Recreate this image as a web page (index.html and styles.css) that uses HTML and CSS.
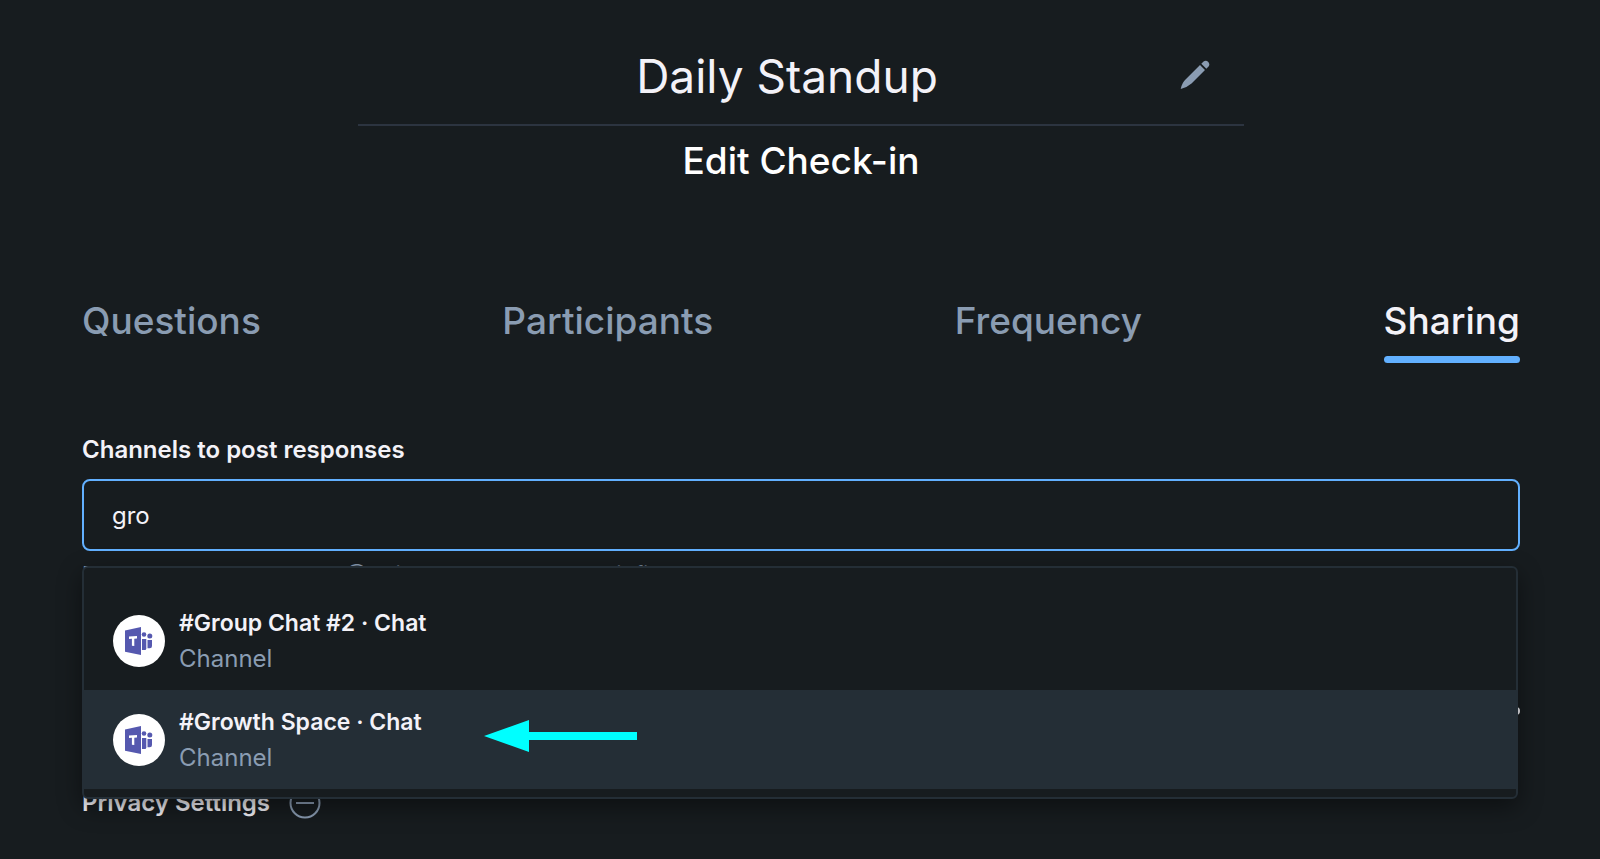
FILE: index.html
```html
<!DOCTYPE html>
<html lang="en">
<head>
  <meta charset="UTF-8">
  <meta name="viewport" content="width=device-width, initial-scale=1.0">
  <title>Edit Check-in</title>
  <link rel="stylesheet" href="styles.css">
</head>
<body>

  <!-- Teams logo, reused by every option -->
  <svg class="sprite" width="0" height="0" aria-hidden="true">
    <symbol id="teams" viewBox="0 0 52 52">
      <circle cx="26" cy="26" r="26" fill="#fff"/>
      <g fill="#5558af">
        <path d="M12 15.500 28 12v28l-16-3.200z"/>
        <circle cx="31" cy="19.500" r="2.300"/>
        <circle cx="36.800" cy="21" r="2.500"/>
        <path d="M29 24h4.300v9.500q0 1.500-1.500 1.500H29z"/>
        <path d="M34.500 25H39v6q0 2.300-2.300 2.300h-2.200z"/>
      </g>
      <path d="M16 21.600 24 21v2.500l-2.700.15V31l-2.400-.15v-7.100l-2.900.15z" fill="#fff"/>
    </symbol>
  </svg>

  <main class="page">
    <header class="header">
      <div class="title">
        <input class="title-input" type="text" value="Daily Standup" aria-label="Check-in name">
        <button class="title-edit" type="button" aria-label="Edit name">
          <svg width="30" height="30" viewBox="0 0 30 30" fill="#8a9cb2">
            <path d="M20 5 25 10 11.500 23.500Q7 27.500.7 29 2 22.500 6 19z"/>
            <path d="M21.300 3.800 23.300 1.800q2.500-2 5 .2 2 2.500 0 4.800L26.300 8.800z"/>
          </svg>
        </button>
      </div>
      <h1 class="subtitle">Edit Check-in</h1>
    </header>

    <nav class="tabs">
      <a class="tab" href="#questions">Questions</a>
      <a class="tab" href="#participants">Participants</a>
      <a class="tab" href="#frequency">Frequency</a>
      <a class="tab active" href="#sharing">Sharing</a>
    </nav>

    <section class="sharing">
      <label class="label" for="channels">Channels to post responses</label>
      <div class="combo">
        <input class="combo-input" id="channels" type="text" value="gro" autocomplete="off">

        <ul class="menu">
          <li>
            <button class="option" type="button">
              <svg class="avatar"><use href="#teams"/></svg>
              <span class="option-text">
                <span class="option-name">#Group Chat #2 · Chat</span>
                <span class="option-type">Channel</span>
              </span>
            </button>
          </li>
          <li>
            <button class="option selected" type="button">
              <svg class="avatar"><use href="#teams"/></svg>
              <span class="option-text">
                <span class="option-name">#Growth Space · Chat</span>
                <span class="option-type">Channel</span>
              </span>
              <svg class="arrow" width="154" height="32" viewBox="0 0 154 32" fill="#00ffff">
                <path d="M0 16 45 0v12h108v8H45v12z"/>
              </svg>
            </button>
          </li>
        </ul>
      </div>
      <p class="hint">For each channel, make "@DailyBot" was added to it first</p>

      <div class="status"><span class="dot"></span></div>

      <div class="privacy">
        <h2 class="privacy-title">Privacy Settings</h2>
        <button class="collapse" type="button" aria-label="Collapse privacy settings">
          <svg width="32" height="32" viewBox="0 0 32 32" fill="none" stroke="#8a9cb2" stroke-width="2">
            <circle cx="16" cy="16" r="14.500"/>
            <path d="M7 16h18"/>
          </svg>
        </button>
      </div>
    </section>
  </main>

</body>
</html>
```

FILE: styles.css
```css
* {
  box-sizing: border-box;
}

body {
  margin: 0;
  background: #171c1f;
  color: #f3f2f8;
  font-family: Inter, "Liberation Sans", sans-serif;
  font-size: 24px;
}

button {
  border: 0;
  padding: 0;
  background: none;
  color: inherit;
  font: inherit;
  cursor: pointer;
}

svg {
  display: block;
}

.sprite {
  position: absolute;
}

.page {
  padding: 32px 80px 32px 82px;
}

/* Header */
.header {
  max-width: 886px;
  margin: 0 auto;
  text-align: center;
}

.title {
  position: relative;
  border-bottom: 2px solid #2c3440;
}

.title-input {
  display: block;
  width: 100%;
  height: 92px;
  padding: 0 28px 4px 0;
  border: 0;
  outline: 0;
  background: none;
  color: inherit;
  font: 400 46px Inter, "Liberation Sans", sans-serif;
  text-align: center;
}

.title-edit {
  position: absolute;
  top: 28px;
  right: 34px;
}

.subtitle {
  margin: 12px 0 0;
  color: #fff;
  font-size: 37px;
  font-weight: 500;
  line-height: 46px;
}

/* Tabs */
.tabs {
  display: flex;
  justify-content: space-between;
  margin-top: 113px;
}

.tab {
  padding-bottom: 11px;
  border-bottom: 7px solid transparent;
  color: #8a9cb2;
  font-size: 37px;
  font-weight: 500;
  line-height: 48px;
  text-decoration: none;
}

.tab.active {
  position: relative;
  color: #f3f2f8;
}

.tab.active::after {
  content: "";
  position: absolute;
  left: 0;
  right: 0;
  bottom: -7px;
  height: 7px;
  border-radius: 4px;
  background: #62b0ff;
}

/* Channel picker */
.sharing {
  margin-top: 71px;
}

.label {
  display: block;
  font-weight: 600;
  line-height: 32px;
}

.combo {
  position: relative;
  margin-top: 13px;
}

.combo-input {
  display: block;
  width: 100%;
  height: 72px;
  padding: 0 28px;
  border: 2px solid #62b0ff;
  border-radius: 8px;
  outline: 0;
  background: #171c1f;
  color: inherit;
  font: inherit;
}

.menu {
  position: absolute;
  z-index: 1;
  top: 87px;
  left: 0;
  right: 2px;
  margin: 0;
  padding: 23px 0 8px;
  border: 2px solid #242e36;
  border-radius: 6px;
  background: #171c1f;
  box-shadow: 0 8px 24px rgba(0, 0, 0, 0.45);
  list-style: none;
}

.option {
  display: flex;
  align-items: center;
  width: 100%;
  height: 99px;
  padding: 0 29px;
  text-align: left;
}

.option.selected {
  background: #242e36;
}

.avatar {
  width: 52px;
  height: 52px;
}

.option-text {
  display: flex;
  flex-direction: column;
  margin-left: 14px;
  line-height: 36px;
}

.option-name {
  font-size: 23px;
  font-weight: 600;
}

.option-type {
  color: #8a9cb2;
}

.arrow {
  margin: 0 0 7px 62px;
}

.hint {
  margin: 7px 0 0;
  color: #8a9cb2;
  font-size: 22px;
  line-height: 32px;
}

.status {
  display: flex;
  justify-content: flex-end;
  margin-top: 117px;
}

.dot {
  width: 8px;
  height: 8px;
  border-radius: 50%;
  background: #f3f2f8;
}

/* Privacy */
.privacy {
  display: flex;
  align-items: center;
  gap: 19px;
  margin-top: 72px;
}

.privacy-title {
  margin: 0;
  font-size: 24px;
  font-weight: 600;
  line-height: 32px;
}
```
